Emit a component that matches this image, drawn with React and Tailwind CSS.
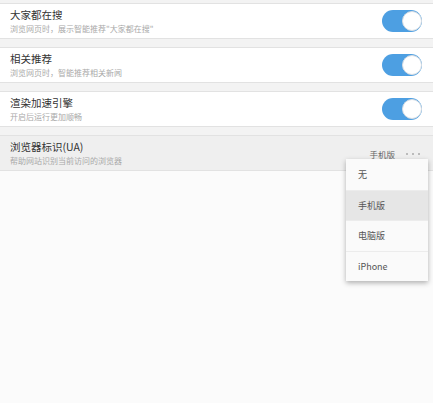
import React, { useState } from 'react';

const FONT = { fontFamily: '"Noto Sans CJK SC", "Noto Sans", sans-serif' };

const rows = [
  { id: 'hot', title: '大家都在搜', desc: '浏览网页时，展示智能推荐"大家都在搜"' },
  { id: 'news', title: '相关推荐', desc: '浏览网页时，智能推荐相关新闻' },
  { id: 'render', title: '渲染加速引擎', desc: '开启后运行更加顺畅' },
];

const uaOptions = ['无', '手机版', '电脑版', 'iPhone'];

const Toggle = ({ on, onClick }) => (
  <button
    onClick={onClick}
    className={`relative w-[40px] h-[22px] rounded-full ${on ? 'bg-[#4d9fe2]' : 'bg-[#dcdcdc]'}`}
  >
    <span
      className={`absolute top-[1px] w-[20px] h-[20px] rounded-full bg-white border border-[#d8dde2] ${
        on ? 'right-[0px]' : 'left-[0px]'
      }`}
    />
  </button>
);

const App = () => {
  const [enabled, setEnabled] = useState({ hot: true, news: true, render: true });
  const [ua, setUa] = useState('手机版');

  return (
    <div className="min-h-screen bg-[#fbfbfb]" style={FONT}>
      <div className="bg-[#f3f3f3] pt-[3px] flex flex-col gap-[8px]">
        {rows.map((row) => (
          <div
            key={row.id}
            className="h-[36px] bg-white border-y border-[#e2e2e2] flex items-center justify-between pl-[10px] pr-[11px]"
          >
            <div className="flex flex-col">
              <span className="text-[10.5px] leading-[14px] text-[#333]">{row.title}</span>
              <span className="text-[8px] leading-[12px] text-[#a9a9a9] mt-[1px]">{row.desc}</span>
            </div>
            <Toggle
              on={enabled[row.id]}
              onClick={() => setEnabled({ ...enabled, [row.id]: !enabled[row.id] })}
            />
          </div>
        ))}

        {/* UA row */}
        <div className="relative h-[36px] bg-[#efefef] border-y border-[#e2e2e2] flex items-center justify-between pl-[10px] pr-[13px]">
          <div className="flex flex-col">
            <span className="text-[10.5px] leading-[14px] text-[#333]">浏览器标识(UA)</span>
            <span className="text-[8px] leading-[12px] text-[#a9a9a9] mt-[1px]">帮助网站识别当前访问的浏览器</span>
          </div>
          <div className="flex items-center gap-[11px] mt-[2px]">
            <span className="text-[8.5px] text-[#666]">{ua}</span>
            <span className="flex gap-[4px]">
              <span className="w-[2px] h-[2px] rounded-full bg-[#aaa]" />
              <span className="w-[2px] h-[2px] rounded-full bg-[#aaa]" />
              <span className="w-[2px] h-[2px] rounded-full bg-[#aaa]" />
            </span>
          </div>

          {/* dropdown */}
          <div className="absolute left-[346px] top-[23px] w-[82px] bg-[#fafafa] shadow-[0_2px_5px_rgba(0,0,0,0.3)] z-10 flex flex-col">
            {uaOptions.map((opt, i) => (
              <button
                key={opt}
                onClick={() => setUa(opt)}
                className={`h-[30.5px] text-left pl-[12px] text-[9px] text-[#555] ${
                  i > 0 ? 'border-t border-[#ececec]' : ''
                } ${opt === ua ? 'bg-[#e6e6e6]' : ''}`}
              >
                {opt}
              </button>
            ))}
          </div>
        </div>
      </div>
    </div>
  );
};

export default App;
